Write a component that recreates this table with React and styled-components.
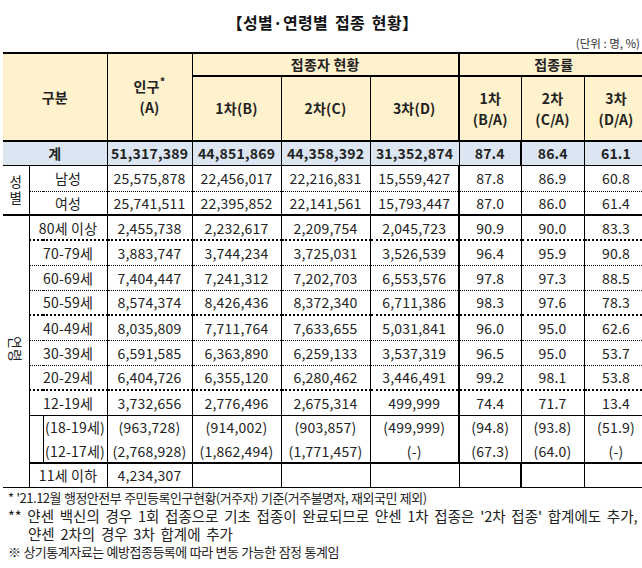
import React from "react";
import styled, { createGlobalStyle } from "styled-components";

const Global = createGlobalStyle`
  body {
    margin: 0;
    background: #fff;
    font-family: "Noto Sans CJK KR", "Noto Sans", sans-serif;
    color: #222;
    overflow: hidden;
  }
`;

const Page = styled.div`
  width: 642px;
  height: 568px;
  overflow: hidden;
  padding-left: 3px;
  box-sizing: border-box;
`;

const Title = styled.h1`
  margin: 0;
  padding-top: 10px;
  height: 26px;
  text-align: center;
  font-size: 16px;
  font-weight: 700;
  line-height: 24px;
  letter-spacing: 0.3px;
  word-spacing: 3px;
  color: #111;
`;

const Unit = styled.div`
  text-align: right;
  font-size: 11.5px;
  line-height: 14px;
  height: 16px;
  padding-right: 2px;
  color: #333;
`;

const Table = styled.table`
  border-collapse: collapse;
  table-layout: fixed;
  width: 645px;
  border-top: 2px solid #000;
  font-size: 14px;
  letter-spacing: 0.2px;
`;

const lines = {
  thin: "1px dotted #000",
  dot2: "2px dotted #000",
  solid: "1px solid #000",
  thick: "2px solid #000",
  none: "none",
};

const Row = styled.tr`
  height: ${(p) => p.$h || 25}px;
  background: ${(p) => (p.$total ? "#dce6f2" : "#fff")};
  font-weight: ${(p) => (p.$total ? 700 : 400)};
  & > td {
    border-bottom: ${(p) => lines[p.$line || "thin"]};
  }
`;

const HeadRow = styled.tr`
  height: ${(p) => p.$h}px;
  background: #fff2cc;
`;

const Th = styled.th`
  font-weight: 700;
  font-size: 14px;
  line-height: 21px;
  text-align: center;
  vertical-align: middle;
  padding: 0;
  color: #222;
  border-left: ${(p) => (p.$edge ? "none" : "1px solid #000")};
  border-right: ${(p) => (p.$thick ? "2px solid #000" : "1px solid #000")};
  border-bottom: 2px solid #000;
  & sup {
    font-size: 11px;
    vertical-align: 6px;
    line-height: 0;
  }
`;

const Td = styled.td`
  padding: 0;
  text-align: center;
  vertical-align: middle;
  white-space: nowrap;
  line-height: 20px;
  border-left: ${(p) => (p.$edge ? "none" : "1px solid #000")};
  border-right: ${(p) => (p.$thick ? "2px solid #000" : "1px solid #000")};
`;

const GroupCell = styled.td`
  padding: 0;
  text-align: center;
  vertical-align: middle;
  border-left: none;
  border-right: 1px solid #000;
  border-bottom: ${(p) => lines[p.$line]} !important;
  background: #fff;
  font-weight: 400;
`;

const Stacked = styled.span`
  display: inline-block;
  font-size: 13.5px;
  line-height: 16px;
  letter-spacing: 0;
`;

const Sideways = styled.span`
  display: inline-block;
  writing-mode: vertical-rl;
  text-orientation: sideways;
  font-size: 14px;
  line-height: 14px;
`;

const Notes = styled.div`
  margin-top: 1px;
  padding-left: 5px;
  line-height: 18px;
  white-space: nowrap;
  color: #222;
`;

const Note = styled.div`
  height: 18px;
  padding-left: ${(p) => (p.$indent ? "20px" : "0")};
  font-size: ${(p) => (p.$big ? "14.5px" : "13px")};
  letter-spacing: ${(p) => (p.$big ? "0" : "-0.5px")};
  word-spacing: ${(p) => (p.$big ? "2.5px" : "0.5px")};
`;

const sex = [
  ["남성", "25,575,878", "22,456,017", "22,216,831", "15,559,427", "87.8", "86.9", "60.8", "thin", 26],
  ["여성", "25,741,511", "22,395,852", "22,141,561", "15,793,447", "87.0", "86.0", "61.4", "thick", 24],
];

const ages = [
  ["80세 이상", "2,455,738", "2,232,617", "2,209,754", "2,045,723", "90.9", "90.0", "83.3", "dot2"],
  ["70-79세", "3,883,747", "3,744,234", "3,725,031", "3,526,539", "96.4", "95.9", "90.8", "thin"],
  ["60-69세", "7,404,447", "7,241,312", "7,202,703", "6,553,576", "97.8", "97.3", "88.5", "thin"],
  ["50-59세", "8,574,374", "8,426,436", "8,372,340", "6,711,386", "98.3", "97.6", "78.3", "dot2"],
  ["40-49세", "8,035,809", "7,711,764", "7,633,655", "5,031,841", "96.0", "95.0", "62.6", "thin"],
  ["30-39세", "6,591,585", "6,363,890", "6,259,133", "3,537,319", "96.5", "95.0", "53.7", "thin"],
  ["20-29세", "6,404,726", "6,355,120", "6,280,462", "3,446,491", "99.2", "98.1", "53.8", "dot2"],
  ["12-19세", "3,732,656", "2,776,496", "2,675,314", "499,999", "74.4", "71.7", "13.4", "solid"],
];

const subs = [
  ["(18-19세)", "(963,728)", "(914,002)", "(903,857)", "(499,999)", "(94.8)", "(93.8)", "(51.9)", "none"],
  ["(12-17세)", "(2,768,928)", "(1,862,494)", "(1,771,457)", "(-)", "(67.3)", "(64.0)", "(-)", "thick"],
];

function Values({ v }) {
  return (
    <>
      {v.slice(0, 4).map((x, i) => (
        <Td key={i} $thick={i === 3}>{x}</Td>
      ))}
      {v.slice(4, 7).map((x, i) => (
        <Td key={"r" + i}>{x}</Td>
      ))}
    </>
  );
}

export default function App() {
  return (
    <Page>
      <Global />
      <Title>【성별·연령별 접종 현황】</Title>
      <Unit>(단위 : 명, %)</Unit>
      <Table>
        <colgroup>
          <col style={{ width: 26 }} />
          <col style={{ width: 14 }} />
          <col style={{ width: 64 }} />
          <col style={{ width: 85 }} />
          <col style={{ width: 89 }} />
          <col style={{ width: 89 }} />
          <col style={{ width: 89 }} />
          <col style={{ width: 62 }} />
          <col style={{ width: 63 }} />
          <col style={{ width: 64 }} />
        </colgroup>
        <thead>
          <HeadRow $h={20}>
            <Th colSpan={3} rowSpan={2} $edge>구분</Th>
            <Th rowSpan={2}>
              인구<sup>*</sup>
              <br />
              (A)
            </Th>
            <Th colSpan={3} $thick>접종자 현황</Th>
            <Th colSpan={3}>접종률</Th>
          </HeadRow>
          <HeadRow $h={65}>
            <Th>1차(B)</Th>
            <Th>2차(C)</Th>
            <Th $thick>3차(D)</Th>
            <Th>1차<br />(B/A)</Th>
            <Th>2차<br />(C/A)</Th>
            <Th>3차<br />(D/A)</Th>
          </HeadRow>
        </thead>
        <tbody>
          <Row $total $line="solid" $h={24}>
            <Td colSpan={3} $edge>계</Td>
            <Td>51,317,389</Td>
            <Values v={["44,851,869", "44,358,392", "31,352,874", "87.4", "86.4", "61.1"]} />
          </Row>
          {sex.map((r, i) => (
            <Row key={r[0]} $line={r[8]} $h={r[9]}>
              {i === 0 && (
                <GroupCell rowSpan={2} $line="thick">
                  <Stacked>성<br />별</Stacked>
                </GroupCell>
              )}
              <Td colSpan={2}>{r[0]}</Td>
              <Values v={r.slice(1, 8)} />
            </Row>
          ))}
          {ages.map((r, i) => (
            <Row key={r[0]} $line={r[8]}>
              {i === 0 && (
                <GroupCell rowSpan={11} $line="solid">
                  <Sideways>연령</Sideways>
                </GroupCell>
              )}
              <Td colSpan={2}>{r[0]}</Td>
              <Values v={r.slice(1, 8)} />
            </Row>
          ))}
          {subs.map((r, i) => (
            <Row key={r[0]} $line={r[8]} $h={24}>
              {i === 0 && <GroupCell rowSpan={2} $line="thick" />}
              <Td>{r[0]}</Td>
              <Values v={r.slice(1, 8)} />
            </Row>
          ))}
          <Row $line="solid" $h={24}>
            <Td colSpan={2}>11세 이하</Td>
            <Td>4,234,307</Td>
            <Values v={["", "", "", "", "", ""]} />
          </Row>
        </tbody>
      </Table>
      <Notes>
        <Note>* &#39;21.12월 행정안전부 주민등록인구현황(거주자) 기준(거주불명자, 재외국민 제외)</Note>
        <Note $big>** 얀센 백신의 경우 1회 접종으로 기초 접종이 완료되므로 얀센 1차 접종은 &#39;2차 접종&#39; 합계에도 추가,</Note>
        <Note $big $indent>얀센 2차의 경우 3차 합계에 추가</Note>
        <Note>※ 상기통계자료는 예방접종등록에 따라 변동 가능한 잠정 통계임</Note>
      </Notes>
    </Page>
  );
}
